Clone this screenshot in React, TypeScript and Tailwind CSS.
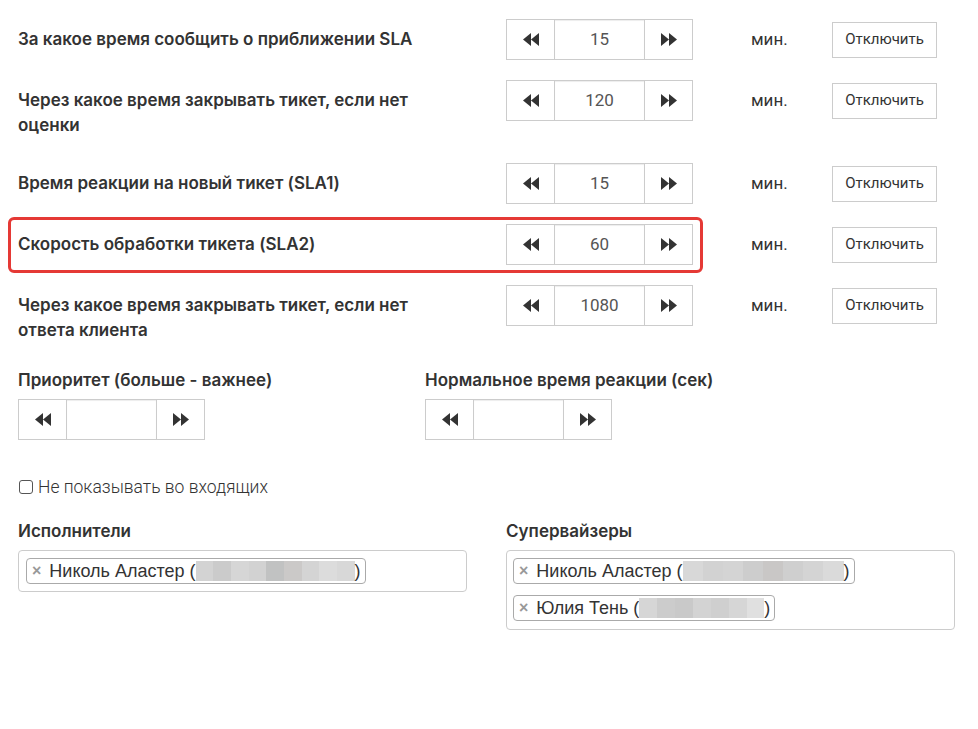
import React from "react";

const LABEL = "font-['Inter',sans-serif] text-[17px] font-semibold text-[#333]";

function Back() {
  return (
    <svg width="16" height="13" viewBox="0 0 16 13" fill="#333">
      <path d="M8 0 L0 6.5 L8 13 Z M16 0 L8 6.5 L16 13 Z" />
    </svg>
  );
}
function Fwd() {
  return (
    <svg width="16" height="13" viewBox="0 0 16 13" fill="#333">
      <path d="M0 0 L8 6.5 L0 13 Z M8 0 L16 6.5 L8 13 Z" />
    </svg>
  );
}

function Spinner({ value }: { value: string }) {
  return (
    <div className="flex h-[41px] w-[187px] border border-[#ccc] bg-white">
      <div className="flex w-[48px] items-center justify-center border-r border-[#ccc]">
        <Back />
      </div>
      <div className="flex flex-1 items-center justify-center shadow-[inset_0_1px_1px_rgba(0,0,0,0.075)] font-['Roboto',sans-serif] text-[17px] font-normal text-[#555]">
        {value}
      </div>
      <div className="flex w-[48px] items-center justify-center border-l border-[#ccc]">
        <Fwd />
      </div>
    </div>
  );
}

function Row({ label, value, highlight }: { label: React.ReactNode; value: string; highlight?: boolean }) {
  return (
    <div className="relative mb-[20px] flex items-start">
      {highlight && (
        <div className="pointer-events-none absolute left-[-10px] top-[-7px] h-[56px] w-[695px] rounded-[6px] border-[3px] border-[#e53935]" />
      )}
      <div className="w-[488px] pt-[8px] pb-[5px]">
        <div className={`max-w-[430px] leading-[25px] ${LABEL}`}>{label}</div>
      </div>
      <Spinner value={value} />
      <div className="flex h-[41px] items-center">
        <span className="ml-[58px] w-[81px] font-['Roboto',sans-serif] text-[17px] text-[#333]">мин.</span>
        <button className="h-[36px] w-[105px] border border-[#ccc] bg-white font-['Roboto',sans-serif] text-[15px] text-[#333]">
          Отключить
        </button>
      </div>
    </div>
  );
}

function Blur({ w, cols }: { w: number; cols: string[] }) {
  return (
    <span className="inline-flex h-[20px] items-stretch" style={{ width: w }}>
      {cols.map((c, i) => (
        <span key={i} className="flex-1" style={{ background: c }} />
      ))}
    </span>
  );
}

function Tag({ name, blurW, cols }: { name: string; blurW: number; cols: string[] }) {
  return (
    <div className="flex h-[26px] items-center self-start rounded-[4px] border border-[#aaa] bg-white pl-[5px] pr-[4px] font-['Liberation_Sans',Arial,sans-serif] text-[18px] leading-none text-[#333]">
      <span className="mr-[8px] text-[16px] font-bold text-[#999]">×</span>
      <span>{name} (</span>
      <Blur w={blurW} cols={cols} />
      <span>)</span>
    </div>
  );
}

const C1 = ["#d3d3d3", "#cbcbcb", "#d6d6d6", "#d2d2d2", "#c1c2c2", "#cbc9c8", "#d4d4d4", "#dcdcdc", "#d8d8d8"];
const C2 = ["#d8d8d8", "#d2d2d2", "#d4d4d4", "#cdcdcd", "#c9c7c6", "#cfcfcf", "#d4d4d4", "#dadada"];
const C3 = ["#d6d6d6", "#cccccc", "#c9c9c9", "#d3d3d3", "#cfcfcf", "#d6d6d6", "#e0e0e0"];

export default function App() {
  return (
    <div className="min-h-[729px] w-[978px] bg-white pl-[18px] pt-[19px]">
      <Row label="За какое время сообщить о приближении SLA" value="15" />
      <Row label="Через какое время закрывать тикет, если нет оценки" value="120" />
      <Row label="Время реакции на новый тикет (SLA1)" value="15" />
      <Row label="Скорость обработки тикета (SLA2)" value="60" highlight />
      <Row label="Через какое время закрывать тикет, если нет ответа клиента" value="1080" />

      <div className="flex">
        <div className="w-[407px]">
          <div className={`mb-[6px] leading-[25px] ${LABEL} font-medium`}>Приоритет (больше - важнее)</div>
          <Spinner value="" />
        </div>
        <div>
          <div className={`mb-[6px] leading-[25px] ${LABEL} font-medium`}>Нормальное время реакции (сек)</div>
          <Spinner value="" />
        </div>
      </div>

      <label className="mt-[35px] flex h-[24px] items-center font-['Roboto',sans-serif] text-[17.5px] font-light text-[#333]">
        <span className="ml-[1px] mr-[5px] inline-block h-[14px] w-[14px] rounded-[3px] border border-[#555] bg-white" />
        Не показывать во входящих
      </label>

      <div className="mt-[20px] flex">
        <div className="w-[488px]">
          <div className={`mb-[7px] leading-[24px] ${LABEL}`}>Исполнители</div>
          <div className="flex w-[449px] flex-col gap-[11px] rounded-[4px] border border-[#ccc] px-[7px] pb-[7px] pt-[7px]">
            <Tag name="Николь Аластер" blurW={159} cols={C1} />
          </div>
        </div>
        <div>
          <div className={`mb-[7px] leading-[24px] ${LABEL}`}>Супервайзеры</div>
          <div className="flex w-[449px] flex-col gap-[11px] rounded-[4px] border border-[#ccc] px-[6px] pb-[8px] pt-[7px]">
            <Tag name="Николь Аластер" blurW={161} cols={C2} />
            <Tag name="Юлия Тень" blurW={125} cols={C3} />
          </div>
        </div>
      </div>
    </div>
  );
}
